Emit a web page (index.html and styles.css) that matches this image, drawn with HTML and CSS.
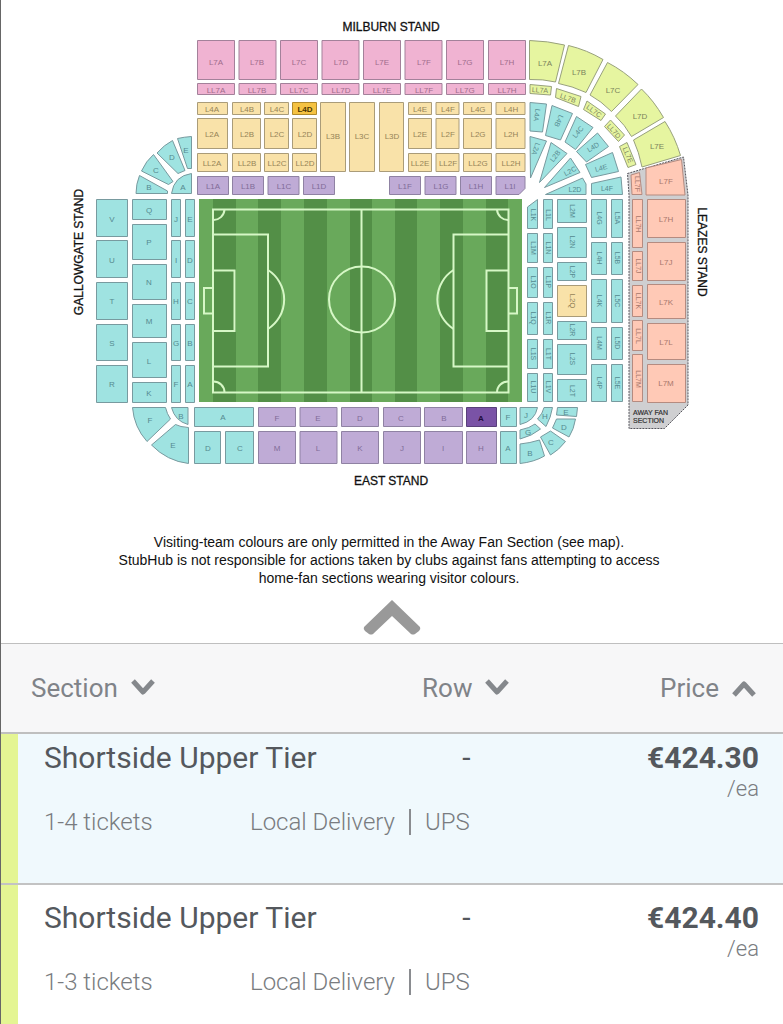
FILE: index.html
```html
<!DOCTYPE html>
<html lang="en">
<head>
<meta charset="utf-8">
<meta name="viewport" content="width=device-width, initial-scale=1">
<title>Tickets</title>
<link rel="stylesheet" href="styles.css">
</head>
<body>
<main class="app">
<section class="venue">
<svg class="map" viewBox="1 0 782 500" role="img" aria-label="Stadium seating map">
  <g class="stand">
    <text x="391" y="27">MILBURN STAND</text>
    <text x="391" y="481">EAST STAND</text>
    <text transform="rotate(-90)" x="-252" y="79">GALLOWGATE STAND</text>
    <text transform="rotate(90)" x="252" y="-702">LEAZES STAND</text>
  </g>

  <!-- Pitch -->
  <path class="grass" d="M199 199h323v203h-323z"/>
  <path class="mown" d="M213 199h23v203h-23zM258 199h23v203h-23zM304 199h23v203h-23zM350 199h22v203h-22zM395 199h22v203h-22zM440 199h23v203h-23zM486 199h22v203h-22z"/>
  <g class="lines">
    <path d="M213 209.500H508.500V392.500H213zM361.500 209.500V392.500M213 234.500H268V366.500H213M213 270.500H234.500V331H213M213 288H204V313.500H213M508.500 234.500H453.500V366.500H508.500M508.500 270.500H486.500V331H508.500M508.500 288H517V313.500H508.500"/>
    <path d="M268 270A35 35 0 0 1 268 329M453.500 270A35 35 0 0 0 453.500 329M224.500 209.500A11 11 0 0 1 213 220M213 381.500A11 11 0 0 1 224.500 392.500M497 209.500A11 11 0 0 0 508.500 220M508.500 381.500A11 11 0 0 0 497 392.500"/>
    <circle cx="362" cy="299.500" r="33"/>
  </g>

  <!-- Away fan section -->
  <path class="away" d="M627.500 173.500L683.500 157L688 195V405L664.500 428.500H629V195z"/>

  <g class="block">
    <path class="pink" d="M197.500 40.500h37v39h-37zM239 40.500h37v39h-37zM280.500 40.500h37v39h-37zM322 40.500h37v39h-37zM363.500 40.500h37v39h-37zM405 40.500h37v39h-37zM446.500 40.500h37v39h-37zM488.500 40.500h37v39h-37zM197.500 83.500h37v11h-37zM239 83.500h37v11h-37zM280.500 83.500h37v11h-37zM322 83.500h37v11h-37zM363.500 83.500h37v11h-37zM405 83.500h37v11h-37zM446.500 83.500h37v11h-37zM488.500 83.500h37v11h-37z"/>
    <path class="sand" d="M197.500 102.500h30v12h-30zM232.500 102.500h28v12h-28zM264.500 102.500h24v12h-24zM408.500 102.500h23v12h-23zM436 102.500h23v12h-23zM463.500 102.500h28v12h-28zM496 102.500h29v12h-29zM197.500 118.500h30v30h-30zM232.500 118.500h28v30h-28zM264.500 118.500h24v30h-24zM292.500 118.500h24v30h-24zM408.500 118.500h23v30h-23zM436 118.500h23v30h-23zM463.500 118.500h28v30h-28zM496 118.500h29v30h-29zM197.500 153.500h30v18h-30zM232.500 153.500h28v18h-28zM264.500 153.500h24v18h-24zM292.500 153.500h24v18h-24zM408.500 153.500h23v18h-23zM436 153.500h23v18h-23zM463.500 153.500h28v18h-28zM496 153.500h29v18h-29zM320.500 102.500h25v69h-25zM349.500 102.500h25v69h-25zM379.500 102.500h24v69h-24zM557.500 285.500h29v31h-29z"/>
    <path class="gold" d="M292.500 102.500h24v12h-24z"/>
    <path class="purple" d="M197.500 176.500h31v18h-31zM232.500 176.500h31v18h-31zM268 176.500h31v18h-31zM303.500 176.500h31v18h-31zM389.500 176.500h31v18h-31zM425 176.500h31v18h-31zM460.500 176.500h31v18h-31zM496 176.500h29v12l-6 6h-23zM258.500 407.500h37v19h-37zM300 407.500h37v19h-37zM341.500 407.500h37v19h-37zM383.500 407.500h37v19h-37zM424.500 407.500h38v19h-38zM258.500 431.500h37v32h-37zM300 431.500h37v32h-37zM341.500 431.500h37v32h-37zM383.500 431.500h37v32h-37zM424.500 431.500h38v32h-38zM466.500 431.500h30v32h-30z"/>
    <path class="violet" d="M466.500 407.500h30v19h-30z"/>
    <path class="lime" d="M529.500 40.500Q548 41 564.500 45L555.500 82Q543 79 529.500 79.500zM568.500 45.500Q587 50 603 59.500L586 92.500Q572 86 558.500 83.500zM607.500 62.500Q624 71 638 84.500L611.500 111.500Q601 101 590 95zM641.500 89Q654 101 663.500 117.500L631.500 136.500Q625 125 615.500 116zM665 121.500Q675 137 680.500 155.500L642 167Q639 152 633.500 140zM530 84.500L551.500 86.500L550.500 95L530 93.500zM556.500 88.500L581 96.500L578.500 106.500L555.500 97.500zM587 101L605.500 114L601 120.500L583.500 109.500zM610.500 120L624.500 135L618.500 141.500L604.500 126.500zM627 142.500L636 164.500L628 167.500L619.500 146.500z"/>
    <!-- North-east ring -->
    <path class="teal" d="M530 102.500L546.500 104L542.500 132L530 131zM552 105.500L572.500 113.500L560.500 140L545.500 135.500zM576.500 116.500L593 127.500L575.500 149.500L565 142zM597.500 133L608.500 146.500L586.500 162L576.500 151.500zM612.500 152.500L618.500 171.500L591.500 177.500L585.500 164.500zM621 177L622.500 194.500H591.500V183.500zM530 136.500L546.500 141L530.500 178zM551 142.500L567 153.500L539.500 182.500zM570.500 158L580 172.500L544.500 187.500zM582.500 178L586 184V194.500H545.500z"/>
    <!-- East columns -->
    <path class="teal" d="M537.500 199.500V228.500H527.500V207zM527.500 233.500h10v29h-10zM527.500 267.500h10v30h-10zM527.500 302.500h10v32h-10zM527.500 339.500h10v29h-10zM527.500 373.500h10v28h-10zM543.500 199.500h9v29h-9zM543.500 233.500h9v29h-9zM543.500 267.500h9v30h-9zM543.500 302.500h9v32h-9zM543.500 339.500h9v29h-9zM543.500 373.500h9v28h-9zM557.500 199.500h29v23h-29zM557.500 227.500h29v30h-29zM557.500 262.500h29v18h-29zM557.500 321.500h29v18h-29zM557.500 344.500h29v30h-29zM557.500 379.500h29v22h-29zM591.500 199.500h15v38h-15zM591.500 242.500h15v32h-15zM591.500 279.500h15v43h-15zM591.500 327.500h15v32h-15zM591.500 364.500h15v37h-15zM611.500 199.500h11v38h-11zM611.500 242.500h11v32h-11zM611.500 279.500h11v43h-11zM611.500 327.500h11v32h-11zM611.500 364.500h11v37h-11z"/>
    <!-- West columns -->
    <path class="teal" d="M96.500 199.500h31v37h-31zM96.500 240.500h31v37h-31zM96.500 282.500h31v37h-31zM96.500 324.500h31v36h-31zM96.500 365.500h31v37h-31zM132.500 199.500h34v20h-34zM132.500 224.500h34v35h-34zM132.500 264.500h34v35h-34zM132.500 304.500h34v33h-34zM132.500 342.500h34v35h-34zM132.500 382.500h34v20h-34zM171.500 199.500h9v37h-9zM171.500 240.500h9v37h-9zM171.500 282.500h9v37h-9zM171.500 324.500h9v36h-9zM171.500 365.500h9v37h-9zM185.500 199.500h9v37h-9zM185.500 240.500h9v37h-9zM185.500 282.500h9v37h-9zM185.500 324.500h9v36h-9zM185.500 365.500h9v37h-9z"/>
    <!-- Corners -->
    <path class="teal" d="M139.500 175.500L167.500 191V193.500H136Q136 184 139.500 175.500zM153.500 154.500L173 181.500L168.500 184.500L141.500 171Q146 161 153.500 154.500zM172.500 140.500L185 170.500L178 173.500L157 153Q164 145 172.500 140.500zM177.500 138.500Q184 137 191.500 136.500V168.500H187.500zM171.500 193.500Q174 176 191.500 173.500V193.500z"/>
    <path class="teal" d="M132.500 407.500H165.500Q167 414 170.500 419L147 441.500Q134 427 132.500 407.500zM171.500 407.500H188V424.500Q175 421 171.500 407.500zM175.500 424.500Q180 427 188.500 427.500V463.500Q167 461 151.500 445zM194.500 407.500h59v19h-59zM194.500 431.500h26v32h-26zM225.500 431.500h28v32h-28z"/>
    <path class="teal" d="M500.500 407.500h16v19h-16zM500.500 431.500h16v32h-16zM520 407.500h17.500Q535 421 520 424.500zM544 407.500H552.500Q551 417 546 426.500L537.500 419Q543 413 544 407.500zM520 430Q530 428 535 424L540.500 429Q532 436 520 439zM520 444Q530 443 539.500 440L544.500 456Q534 462 520 463.500zM550.500 431L565.500 441.500Q559 450 550.500 455L540.500 437zM556.500 419H575.500Q574 429 569 437L552.500 428zM557.500 407.500H577.500L576.500 416.500L556.500 415z"/>
    <path class="salmon" d="M631 175L639.500 172.500L642 194.500H632zM632.500 199.500h10v48h-10zM632.500 251.500h10v29h-10zM632.500 285.500h10v31h-10zM632.500 320.500h10v30h-10zM632.500 354.500h10v47h-10zM646 168L681.500 159.500L685 195H646zM647.500 199.500h38v38h-38zM647.500 242.500h38v38h-38zM647.500 284.500h38v34h-38zM647.500 323.500h38v36h-38zM647.500 364.500h38v38h-38z"/>
  </g>

  <g class="label on-pink">
    <text x="216" y="62">L7A</text><text x="257" y="62">L7B</text><text x="299" y="62">L7C</text><text x="341" y="62">L7D</text><text x="382" y="62">L7E</text><text x="424" y="62">L7F</text><text x="465" y="62">L7G</text><text x="507" y="62">L7H</text>
    <text x="216" y="90">LL7A</text><text x="257" y="90">LL7B</text><text x="299" y="90">LL7C</text><text x="341" y="90">LL7D</text><text x="382" y="90">LL7E</text><text x="424" y="90">LL7F</text><text x="465" y="90">LL7G</text><text x="507" y="90">LL7H</text>
  </g>
  <g class="label on-sand">
    <text x="212" y="109">L4A</text><text x="247" y="109">L4B</text><text x="277" y="109">L4C</text><text x="420" y="109">L4E</text><text x="448" y="109">L4F</text><text x="478" y="109">L4G</text><text x="511" y="109">L4H</text>
    <text x="212" y="134">L2A</text><text x="247" y="134">L2B</text><text x="277" y="134">L2C</text><text x="305" y="134">L2D</text><text x="420" y="134">L2E</text><text x="448" y="134">L2F</text><text x="478" y="134">L2G</text><text x="511" y="134">L2H</text>
    <text x="212" y="163">LL2A</text><text x="247" y="163">LL2B</text><text x="277" y="163">LL2C</text><text x="305" y="163">LL2D</text><text x="420" y="163">LL2E</text><text x="448" y="163">LL2F</text><text x="478" y="163">LL2G</text><text x="511" y="163">LL2H</text>
    <text x="333" y="136">L3B</text><text x="362" y="136">L3C</text><text x="392" y="136">L3D</text>
    <text transform="rotate(90)" x="301" y="-572">L2Q</text>
  </g>
  <text class="label on-gold" x="305" y="109">L4D</text>
  <g class="label on-purple">
    <text x="213" y="186">L1A</text><text x="248" y="186">L1B</text><text x="284" y="186">L1C</text><text x="319" y="186">L1D</text><text x="405" y="186">L1F</text><text x="441" y="186">L1G</text><text x="476" y="186">L1H</text><text x="510" y="186">L1I</text>
    <text x="277" y="418">F</text><text x="318" y="418">E</text><text x="360" y="418">D</text><text x="401" y="418">C</text><text x="444" y="418">B</text>
    <text x="277" y="448">M</text><text x="318" y="448">L</text><text x="360" y="448">K</text><text x="402" y="448">J</text><text x="443" y="448">I</text><text x="481" y="448">H</text>
  </g>
  <text class="label on-violet" x="481" y="418">A</text>
  <g class="label on-lime">
    <text x="545" y="63">L7A</text><text x="579" y="72">L7B</text><text x="613" y="90">L7C</text><text x="640" y="116">L7D</text><text x="657" y="146">L7E</text>
    <g class="small">
      <text transform="translate(540 90) rotate(4)">LL7A</text><text transform="translate(568 98) rotate(20)">LL7B</text><text transform="translate(594 111) rotate(36)">LL7C</text><text transform="translate(614 131) rotate(48)">LL7D</text><text transform="translate(628 155) rotate(68)">LL7E</text>
    </g>
  </g>
  <g class="label on-salmon">
    <text x="666" y="181">L7F</text><text x="666" y="219">L7H</text><text x="666" y="262">L7J</text><text x="666" y="302">L7K</text><text x="666" y="342">L7L</text><text x="666" y="383">L7M</text>
    <g class="small" transform="rotate(90)">
      <text x="184" y="-637">LL7F</text><text x="224" y="-638">LL7H</text><text x="266" y="-638">LL7J</text><text x="301" y="-638">LL7K</text><text x="336" y="-638">LL7L</text><text x="379" y="-638">LL7M</text>
    </g>
  </g>
  <g class="label on-teal">
    <text x="112" y="219">V</text><text x="112" y="260">U</text><text x="112" y="301">T</text><text x="112" y="343">S</text><text x="112" y="384">R</text>
    <text x="149" y="210">Q</text><text x="149" y="242">P</text><text x="149" y="282">N</text><text x="149" y="321">M</text><text x="149" y="361">L</text><text x="149" y="393">K</text>
    <text x="176" y="219">J</text><text x="176" y="260">I</text><text x="176" y="301">H</text><text x="176" y="343">G</text><text x="176" y="384">F</text>
    <text x="190" y="219">E</text><text x="190" y="260">D</text><text x="190" y="301">C</text><text x="190" y="343">B</text><text x="190" y="384">A</text>
    <text x="149" y="187">B</text><text x="156" y="170">C</text><text x="172" y="157">D</text><text x="186" y="150">E</text><text x="183" y="187">A</text>
    <text x="150" y="420">F</text><text x="181" y="416">B</text><text x="173" y="445">E</text><text x="223" y="417">A</text><text x="208" y="448">D</text><text x="240" y="448">C</text>
    <text x="508" y="417">F</text><text x="508" y="448">A</text><text x="526" y="415">J</text><text x="545" y="416">H</text><text x="528" y="432">G</text><text x="530" y="453">B</text><text x="551" y="442">C</text><text x="564" y="427">D</text><text x="566" y="412">E</text>
    <g class="small">
      <text transform="translate(537 115) rotate(98)">L4A</text><text transform="translate(559 121) rotate(115)">L4B</text><text transform="translate(578 132) rotate(-50)">L4C</text><text transform="translate(593 147) rotate(-32)">L4D</text><text transform="translate(601 168) rotate(-15)">L4E</text><text x="607" y="188">L4F</text>
      <text transform="translate(536 149) rotate(110)">L2A</text><text transform="translate(555 156) rotate(-52)">L2B</text><text transform="translate(570 171) rotate(-28)">L2C</text><text x="575" y="189">L2D</text>
    </g>
    <g class="small" transform="rotate(90)">
      <text x="215" y="-533">L1K</text><text x="248" y="-533">L1M</text><text x="282" y="-533">L1O</text><text x="318" y="-533">L1Q</text><text x="354" y="-533">L1S</text><text x="387" y="-533">L1U</text>
      <text x="215" y="-548">L1L</text><text x="248" y="-548">L1N</text><text x="282" y="-548">L1P</text><text x="318" y="-548">L1R</text><text x="354" y="-548">L1T</text><text x="387" y="-548">L1V</text>
      <text x="211" y="-572">L2M</text><text x="242" y="-572">L2N</text><text x="272" y="-572">L2P</text><text x="330" y="-572">L2R</text><text x="359" y="-572">L2S</text><text x="391" y="-572">L2T</text>
      <text x="218" y="-599">L4G</text><text x="258" y="-599">L4H</text><text x="301" y="-599">L4K</text><text x="343" y="-599">L4M</text><text x="383" y="-599">L4P</text>
      <text x="218" y="-617">L5A</text><text x="258" y="-617">L5B</text><text x="301" y="-617">L5C</text><text x="343" y="-617">L5D</text><text x="383" y="-617">L5E</text>
    </g>
  </g>
  <g class="away-label"><text x="633" y="412">AWAY FAN</text><text x="633" y="420">SECTION</text></g>
</svg>
<p class="note">Visiting-team colours are only permitted in the Away Fan Section (see map).<br>StubHub is not responsible for actions taken by clubs against fans attempting to access<br>home-fan sections wearing visitor colours.</p>
<button class="collapse" type="button" aria-label="Collapse map">
  <svg width="58" height="36" viewBox="0 0 58 36"><path d="M29 0L57 27Q58 29 56 31L52 34Q50 35 48 34L29 16L10 34Q8 35 6 34L2 31Q0 29 1 27z"/></svg>
</button>
</section>

<table class="tickets">
  <colgroup><col class="col-section"><col class="col-row"><col></colgroup>
  <thead>
    <tr>
      <th scope="col"><button type="button">Section <svg width="26" height="20" viewBox="0 0 26 20"><path d="M3 3L13 14L23 3"/></svg></button></th>
      <th scope="col"><button type="button">Row <svg width="26" height="20" viewBox="0 0 26 20"><path d="M3 3L13 14L23 3"/></svg></button></th>
      <th scope="col"><button type="button">Price <svg width="26" height="20" viewBox="0 0 26 20"><path d="M3 17L13 6L23 17"/></svg></button></th>
    </tr>
  </thead>
  <tbody class="listing selected">
    <tr class="summary"><td>Shortside Upper Tier</td><td>-</td><td><strong>€424.30</strong><small>/ea</small></td></tr>
    <tr class="detail"><td colspan="3"><div class="terms"><span class="count">1-4 tickets</span><span class="delivery">Local Delivery<i class="bar"></i>UPS</span></div></td></tr>
  </tbody>
  <tbody class="listing">
    <tr class="summary"><td>Shortside Upper Tier</td><td>-</td><td><strong>€424.40</strong><small>/ea</small></td></tr>
    <tr class="detail"><td colspan="3"><div class="terms"><span class="count">1-3 tickets</span><span class="delivery">Local Delivery<i class="bar"></i>UPS</span></div></td></tr>
  </tbody>
</table>
</main>
</body>
</html>
```
FILE: styles.css
```css
* { box-sizing: border-box; }
body { margin: 0; background: #fff; color: #54585d; font-family: Roboto, "Liberation Sans", sans-serif; }
button { margin: 0; padding: 0; border: 0; background: none; font: inherit; color: inherit; cursor: pointer; }
.app { height: 100vh; overflow: hidden; border-left: 1px solid #666; }

.venue { display: flex; flex-direction: column; align-items: center; padding-bottom: 7px; }
.map { display: block; width: 100%; height: auto; font-family: "Liberation Sans", Arial, sans-serif; }
.map text { dominant-baseline: central; text-anchor: middle; }
.stand { font-size: 12px; fill: #111; stroke: #111; stroke-width: 0.3px; }
.grass { fill: #69a95b; }
.mown { fill: #538f47; }
.lines { fill: none; stroke: #d6f7c6; stroke-width: 2px; }
.away { fill: #cfcfd1; stroke: #55555c; stroke-width: 1px; stroke-dasharray: 2 1; }
.block { stroke: #8a8f93; stroke-width: 1px; stroke-linejoin: round; }
.pink { fill: #f0b3d2; stroke: #a3819a; }
.sand { fill: #f9e2a9; stroke: #aa9c79; }
.gold { fill: #f5c242; stroke: #b08a2c; }
.purple { fill: #bfabd6; stroke: #8f82a3; }
.violet { fill: #7a53a6; stroke: #59407a; }
.lime { fill: #e6f5a0; stroke: #98a17c; }
.teal { fill: #9fe3e1; stroke: #789a9f; }
.salmon { fill: #ffc9b6; stroke: #b58b80; }
.label { font-size: 8px; }
.small { font-size: 7px; }
.on-pink { fill: #a06c8c; }
.on-sand { fill: #968458; }
.on-gold { fill: #4a3500; font-weight: 700; }
.on-purple { fill: #7f6c98; }
.on-violet { fill: #1f0c3c; font-weight: 700; }
.on-lime { fill: #7b845c; }
.on-salmon { fill: #a8776c; }
.on-teal { fill: #558a90; }
.map .away-label text { text-anchor: start; font-size: 7px; fill: #333; stroke: #333; stroke-width: 0.2px; }

.note { margin: 33px 0 13px; padding-right: 6px; font: 14px/18px "Liberation Sans", Arial, sans-serif; color: #111; text-align: center; }
.collapse svg { display: block; fill: #999; }

.tickets { width: 100%; table-layout: fixed; border-spacing: 0; }
.col-section { width: 48%; }
.col-row { width: 23%; }
th { height: 91px; padding: 0; background: #f7f7f8; border: 0 solid #bfbfbf; border-width: 1px 0 2px; font-size: 26px; font-weight: 400; line-height: 32px; color: #808388; }
th button { display: inline-flex; align-items: center; gap: 12px; }
th svg { fill: none; stroke: #85888c; stroke-width: 5px; stroke-linejoin: round; }
td { padding: 0; vertical-align: top; text-align: center; }
th:first-child, td:first-child { text-align: left; }
th:first-child { padding-left: 30px; }
td:first-child { padding-left: 43px; }
th:last-child { padding-right: 26px; text-align: right; }
.listing { background: linear-gradient(to right, #e4f593 17px, #fff 17px); }
.selected { background: linear-gradient(to right, #e4f593 17px, #f0f9fd 17px); }
.summary td { padding-top: 15px; font-size: 30px; line-height: 36px; }
.selected .summary td { padding-top: 6px; }
.summary td:last-child { padding-right: 24px; text-align: right; }
.summary strong { display: block; font-weight: 700; }
.summary small { display: block; font-size: 22px; font-weight: 300; line-height: 26px; color: #797c80; }
.detail td { padding-top: 3px; padding-bottom: 44px; border-bottom: 2px solid #c3c3c3; }
.terms { display: flex; align-items: baseline; font-size: 24px; font-weight: 300; line-height: 34px; color: #797c80; }
.count { width: 206px; }
.delivery { display: flex; align-items: center; }
.bar { width: 2px; height: 26px; margin: 0 14px; background: #8a8c90; }
```
